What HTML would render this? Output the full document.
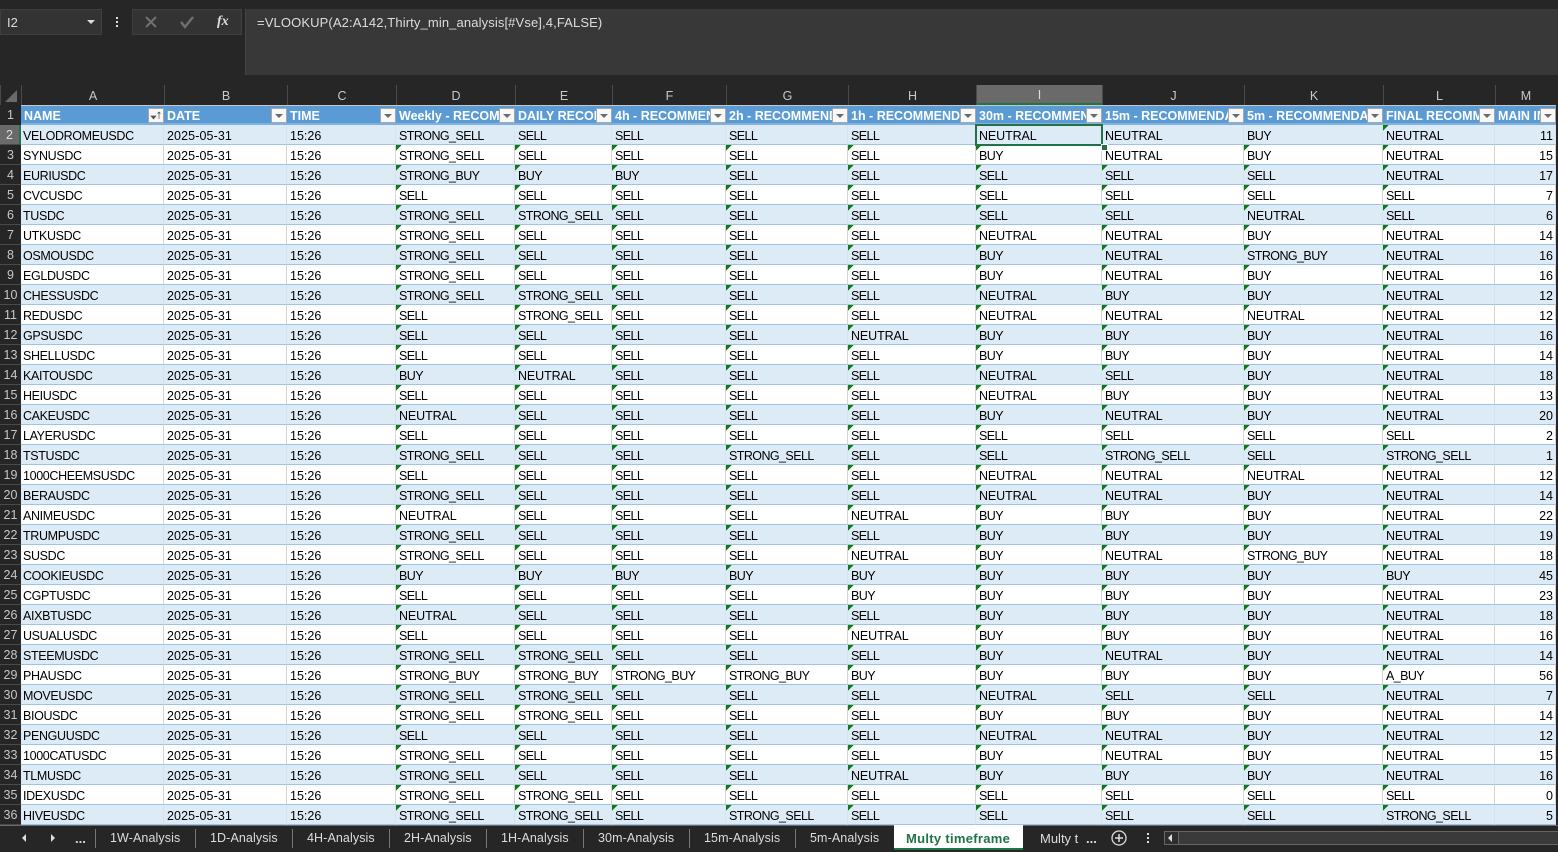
<!DOCTYPE html>
<html><head><meta charset="utf-8"><style>
html,body{margin:0;padding:0;width:1558px;height:852px;overflow:hidden;background:#262626;font-family:"Liberation Sans",sans-serif}
.a{position:absolute;white-space:nowrap}
table{position:absolute;left:0;top:85px;border-collapse:separate;border-spacing:0;table-layout:fixed;width:1556px;font-size:12.5px;color:#000}
th,td{padding:0;overflow:hidden;white-space:nowrap;font-weight:normal;box-sizing:content-box}
.l th{height:20px;background:#262626;color:#c8c8c8;font-size:12.5px;border-left:1px solid #4a4a4a;box-sizing:border-box;padding-top:1px}
.l th.s{background:#6a6a6a;color:#ddd;border-bottom:2px solid #217346}
.h th{height:15px;padding-top:2px;background:#5b9bd5;color:#fff;font-weight:bold;font-size:12.5px;text-align:left;padding-left:3px;position:relative;border-top:1px solid #c8c8c8;border-bottom:2px solid #7fb1df}
.h th:first-child,tbody th{background:#262626;color:#c8c8c8;font-weight:normal;text-align:center;padding:0;border-top:0;border-bottom:1px solid #4a4a4a;font-size:12.5px;letter-spacing:0;height:19px}
.h th:first-child{height:20px;border-bottom:0}
tbody th.s{background:#6a6a6a;color:#ddd;border-right:2px solid #217346}
i.b{position:absolute;right:0;top:2px;width:14px;height:13px;background:#f8f8f8;border:1px solid #a6a6a6}
i.b:after{content:"";position:absolute;left:3px;top:5px;border:4px solid transparent;border-top:4px solid #6a6a6a;border-bottom:0}
i.f:after{display:none}
i.f svg{position:absolute;left:0;top:0}
td{height:17px;padding-top:2px;background-color:#fff;padding-left:3px;border-bottom:1px solid #9dc3e6;border-right:1px solid #d4d4d4;letter-spacing:-.57px}
tbody tr:nth-child(odd) td{background-color:#ddebf7;border-right-color:#d5e3f0}
tbody tr:nth-child(n+2) td:nth-child(n+5):nth-child(-n+13),tbody tr:first-child td.t{background-image:linear-gradient(135deg,#107c10 4px,transparent 4px);background-repeat:no-repeat;background-size:6px 6px}
td:nth-child(2){padding-left:2px;letter-spacing:-.35px}
td:nth-child(3){letter-spacing:.1px}
td:nth-child(4){letter-spacing:0}
td.n{letter-spacing:-.1px}
td:nth-child(14){text-align:right;padding:2px 2px 0 0;letter-spacing:0}
</style></head><body>
<div class="a" style="left:0;top:9px;width:102px;height:26px;background:#333;box-sizing:border-box;border:1px solid #3f3f3f"></div>
<div class="a" style="left:7px;top:15px;color:#ddd;font-size:13px">I2</div>
<div class="a" style="left:87px;top:20px;border:4px solid transparent;border-top:4px solid #ddd;border-bottom:0"></div>
<div class="a" style="left:116px;top:17px;width:2px;height:2px;background:#ddd;box-shadow:0 4px #ddd,0 8px #ddd"></div>
<div class="a" style="left:132px;top:9px;width:110px;height:26px;background:#333;box-sizing:border-box;border:1px solid #3f3f3f"></div>
<svg class="a" style="left:132px;top:9px" width="110" height="26"><path d="M14 8l10 10M24 8L14 18" stroke="#707070" stroke-width="2" fill="none"/><path d="M49 13l4 5 8-10" stroke="#707070" stroke-width="2.4" fill="none"/></svg>
<div class="a" style="left:217px;top:14px;color:#ddd;font:italic bold 14px 'Liberation Serif',serif">fx</div>
<div class="a" style="left:245px;top:9px;width:1313px;height:66px;background:#383838;border-left:1px solid #444;box-sizing:border-box"></div>
<div class="a" style="left:257px;top:15px;color:#ddd;font-size:13px;letter-spacing:.12px">=VLOOKUP(A2:A142,Thirty_min_analysis[#Vse],4,FALSE)</div>
<table>
<colgroup><col style="width:21px"><col style="width:143px"><col style="width:123px"><col style="width:109px"><col style="width:119px"><col style="width:97px"><col style="width:114px"><col style="width:122px"><col style="width:128px"><col style="width:126px"><col style="width:142px"><col style="width:139px"><col style="width:112px"><col style="width:61px"></colgroup>
<thead>
<tr class="l"><th><th>A<th>B<th>C<th>D<th>E<th>F<th>G<th>H<th class="s">I<th>J<th>K<th>L<th>M</tr>
<tr class="h"><th>1<th>NAME<i class="b f"><svg width="14" height="13"><path d="M2 7h5l-2.500 3zM10 10V3M8.500 4.500L10 3l1.500 1.500" fill="#555" stroke="#555" stroke-width=".7"/></svg></i><th>DATE<i class="b"></i><th>TIME<i class="b"></i><th>Weekly - RECOMMENDATION<i class="b"></i><th>DAILY RECOMMENDATION<i class="b"></i><th>4h - RECOMMENDATION<i class="b"></i><th>2h - RECOMMENDATION<i class="b"></i><th>1h - RECOMMENDATION<i class="b"></i><th>30m - RECOMMENDATION<i class="b"></i><th>15m - RECOMMENDATION<i class="b"></i><th>5m - RECOMMENDATION<i class="b"></i><th>FINAL RECOMMENDATION<i class="b"></i><th>MAIN INDEX<i class="b"></i></tr>
</thead>
<tbody>
<tr><th class="s">2<td>VELODROMEUSDC<td>2025-05-31<td>15:26<td>STRONG_SELL<td>SELL<td>SELL<td>SELL<td>SELL<td class="n">NEUTRAL<td class="n">NEUTRAL<td>BUY<td class="t n">NEUTRAL<td>11</tr>
<tr><th>3<td>SYNUSDC<td>2025-05-31<td>15:26<td>STRONG_SELL<td>SELL<td>SELL<td>SELL<td>SELL<td>BUY<td class="n">NEUTRAL<td>BUY<td class="n">NEUTRAL<td>15</tr>
<tr><th>4<td>EURIUSDC<td>2025-05-31<td>15:26<td>STRONG_BUY<td>BUY<td>BUY<td>SELL<td>SELL<td>SELL<td>SELL<td>SELL<td class="n">NEUTRAL<td>17</tr>
<tr><th>5<td>CVCUSDC<td>2025-05-31<td>15:26<td>SELL<td>SELL<td>SELL<td>SELL<td>SELL<td>SELL<td>SELL<td>SELL<td>SELL<td>7</tr>
<tr><th>6<td>TUSDC<td>2025-05-31<td>15:26<td>STRONG_SELL<td>STRONG_SELL<td>SELL<td>SELL<td>SELL<td>SELL<td>SELL<td class="n">NEUTRAL<td>SELL<td>6</tr>
<tr><th>7<td>UTKUSDC<td>2025-05-31<td>15:26<td>STRONG_SELL<td>SELL<td>SELL<td>SELL<td>SELL<td class="n">NEUTRAL<td class="n">NEUTRAL<td>BUY<td class="n">NEUTRAL<td>14</tr>
<tr><th>8<td>OSMOUSDC<td>2025-05-31<td>15:26<td>STRONG_SELL<td>SELL<td>SELL<td>SELL<td>SELL<td>BUY<td class="n">NEUTRAL<td>STRONG_BUY<td class="n">NEUTRAL<td>16</tr>
<tr><th>9<td>EGLDUSDC<td>2025-05-31<td>15:26<td>STRONG_SELL<td>SELL<td>SELL<td>SELL<td>SELL<td>BUY<td class="n">NEUTRAL<td>BUY<td class="n">NEUTRAL<td>16</tr>
<tr><th>10<td>CHESSUSDC<td>2025-05-31<td>15:26<td>STRONG_SELL<td>STRONG_SELL<td>SELL<td>SELL<td>SELL<td class="n">NEUTRAL<td>BUY<td>BUY<td class="n">NEUTRAL<td>12</tr>
<tr><th>11<td>REDUSDC<td>2025-05-31<td>15:26<td>SELL<td>STRONG_SELL<td>SELL<td>SELL<td>SELL<td class="n">NEUTRAL<td class="n">NEUTRAL<td class="n">NEUTRAL<td class="n">NEUTRAL<td>12</tr>
<tr><th>12<td>GPSUSDC<td>2025-05-31<td>15:26<td>SELL<td>SELL<td>SELL<td>SELL<td class="n">NEUTRAL<td>BUY<td>BUY<td>BUY<td class="n">NEUTRAL<td>16</tr>
<tr><th>13<td>SHELLUSDC<td>2025-05-31<td>15:26<td>SELL<td>SELL<td>SELL<td>SELL<td>SELL<td>BUY<td>BUY<td>BUY<td class="n">NEUTRAL<td>14</tr>
<tr><th>14<td>KAITOUSDC<td>2025-05-31<td>15:26<td>BUY<td class="n">NEUTRAL<td>SELL<td>SELL<td>SELL<td class="n">NEUTRAL<td>SELL<td>BUY<td class="n">NEUTRAL<td>18</tr>
<tr><th>15<td>HEIUSDC<td>2025-05-31<td>15:26<td>SELL<td>SELL<td>SELL<td>SELL<td>SELL<td class="n">NEUTRAL<td>BUY<td>BUY<td class="n">NEUTRAL<td>13</tr>
<tr><th>16<td>CAKEUSDC<td>2025-05-31<td>15:26<td class="n">NEUTRAL<td>SELL<td>SELL<td>SELL<td>SELL<td>BUY<td class="n">NEUTRAL<td>BUY<td class="n">NEUTRAL<td>20</tr>
<tr><th>17<td>LAYERUSDC<td>2025-05-31<td>15:26<td>SELL<td>SELL<td>SELL<td>SELL<td>SELL<td>SELL<td>SELL<td>SELL<td>SELL<td>2</tr>
<tr><th>18<td>TSTUSDC<td>2025-05-31<td>15:26<td>STRONG_SELL<td>SELL<td>SELL<td>STRONG_SELL<td>SELL<td>SELL<td>STRONG_SELL<td>SELL<td>STRONG_SELL<td>1</tr>
<tr><th>19<td>1000CHEEMSUSDC<td>2025-05-31<td>15:26<td>SELL<td>SELL<td>SELL<td>SELL<td>SELL<td class="n">NEUTRAL<td class="n">NEUTRAL<td class="n">NEUTRAL<td class="n">NEUTRAL<td>12</tr>
<tr><th>20<td>BERAUSDC<td>2025-05-31<td>15:26<td>STRONG_SELL<td>SELL<td>SELL<td>SELL<td>SELL<td class="n">NEUTRAL<td class="n">NEUTRAL<td>BUY<td class="n">NEUTRAL<td>14</tr>
<tr><th>21<td>ANIMEUSDC<td>2025-05-31<td>15:26<td class="n">NEUTRAL<td>SELL<td>SELL<td>SELL<td class="n">NEUTRAL<td>BUY<td>BUY<td>BUY<td class="n">NEUTRAL<td>22</tr>
<tr><th>22<td>TRUMPUSDC<td>2025-05-31<td>15:26<td>STRONG_SELL<td>SELL<td>SELL<td>SELL<td>SELL<td>BUY<td>BUY<td>BUY<td class="n">NEUTRAL<td>19</tr>
<tr><th>23<td>SUSDC<td>2025-05-31<td>15:26<td>STRONG_SELL<td>SELL<td>SELL<td>SELL<td class="n">NEUTRAL<td>BUY<td class="n">NEUTRAL<td>STRONG_BUY<td class="n">NEUTRAL<td>18</tr>
<tr><th>24<td>COOKIEUSDC<td>2025-05-31<td>15:26<td>BUY<td>BUY<td>BUY<td>BUY<td>BUY<td>BUY<td>BUY<td>BUY<td>BUY<td>45</tr>
<tr><th>25<td>CGPTUSDC<td>2025-05-31<td>15:26<td>SELL<td>SELL<td>SELL<td>SELL<td>BUY<td>BUY<td>BUY<td>BUY<td class="n">NEUTRAL<td>23</tr>
<tr><th>26<td>AIXBTUSDC<td>2025-05-31<td>15:26<td class="n">NEUTRAL<td>SELL<td>SELL<td>SELL<td>SELL<td>BUY<td>BUY<td>BUY<td class="n">NEUTRAL<td>18</tr>
<tr><th>27<td>USUALUSDC<td>2025-05-31<td>15:26<td>SELL<td>SELL<td>SELL<td>SELL<td class="n">NEUTRAL<td>BUY<td>BUY<td>BUY<td class="n">NEUTRAL<td>16</tr>
<tr><th>28<td>STEEMUSDC<td>2025-05-31<td>15:26<td>STRONG_SELL<td>STRONG_SELL<td>SELL<td>SELL<td>SELL<td>BUY<td class="n">NEUTRAL<td>BUY<td class="n">NEUTRAL<td>14</tr>
<tr><th>29<td>PHAUSDC<td>2025-05-31<td>15:26<td>STRONG_BUY<td>STRONG_BUY<td>STRONG_BUY<td>STRONG_BUY<td>BUY<td>BUY<td>BUY<td>BUY<td>A_BUY<td>56</tr>
<tr><th>30<td>MOVEUSDC<td>2025-05-31<td>15:26<td>STRONG_SELL<td>STRONG_SELL<td>SELL<td>SELL<td>SELL<td class="n">NEUTRAL<td>SELL<td>SELL<td class="n">NEUTRAL<td>7</tr>
<tr><th>31<td>BIOUSDC<td>2025-05-31<td>15:26<td>STRONG_SELL<td>STRONG_SELL<td>SELL<td>SELL<td>SELL<td>BUY<td>BUY<td>BUY<td class="n">NEUTRAL<td>14</tr>
<tr><th>32<td>PENGUUSDC<td>2025-05-31<td>15:26<td>SELL<td>SELL<td>SELL<td>SELL<td>SELL<td class="n">NEUTRAL<td class="n">NEUTRAL<td>BUY<td class="n">NEUTRAL<td>12</tr>
<tr><th>33<td>1000CATUSDC<td>2025-05-31<td>15:26<td>STRONG_SELL<td>SELL<td>SELL<td>SELL<td>SELL<td>BUY<td class="n">NEUTRAL<td>BUY<td class="n">NEUTRAL<td>15</tr>
<tr><th>34<td>TLMUSDC<td>2025-05-31<td>15:26<td>STRONG_SELL<td>SELL<td>SELL<td>SELL<td class="n">NEUTRAL<td>BUY<td>BUY<td>BUY<td class="n">NEUTRAL<td>16</tr>
<tr><th>35<td>IDEXUSDC<td>2025-05-31<td>15:26<td>STRONG_SELL<td>STRONG_SELL<td>SELL<td>SELL<td>SELL<td>SELL<td>SELL<td>SELL<td>SELL<td>0</tr>
<tr><th>36<td>HIVEUSDC<td>2025-05-31<td>15:26<td>STRONG_SELL<td>STRONG_SELL<td>SELL<td>STRONG_SELL<td>SELL<td>SELL<td>SELL<td>SELL<td>STRONG_SELL<td>5</tr>
</tbody></table>
<svg class="a" style="left:0;top:85px" width="21" height="20"><path d="M17 5V17H5Z" fill="#6a6a6a"/></svg>
<div class="a" style="left:975px;top:124px;width:128px;height:22px;box-sizing:border-box;border:2px solid #217346"></div>
<div class="a" style="left:1101px;top:144px;width:5px;height:5px;background:#217346;border:1px solid #fff;box-sizing:content-box"></div>
<div class="a" style="left:0;top:825px;width:1558px;height:27px;background:#262626;border-top:1px solid #6a6a6a;box-sizing:border-box"></div>
<div class="a" style="left:22px;top:834px;border:4px solid transparent;border-right:4px solid #ddd;border-left:0"></div>
<div class="a" style="left:51px;top:834px;border:4px solid transparent;border-left:4px solid #ddd;border-right:0"></div>
<div class="a" style="left:75px;top:831px;color:#ddd;font-size:13px;font-weight:bold">...</div>
<div class="a" style="left:95px;top:829px;width:1px;height:19px;background:#777;box-shadow:100px 0 #777,197px 0 #777,294px 0 #777,391px 0 #777,488px 0 #777,594px 0 #777,700px 0 #777"></div>
<div class="a" style="left:110px;top:831px;color:#ddd;font-size:12.5px;letter-spacing:.1px">1W-Analysis</div>
<div class="a" style="left:210px;top:831px;color:#ddd;font-size:12.5px;letter-spacing:.1px">1D-Analysis</div>
<div class="a" style="left:307px;top:831px;color:#ddd;font-size:12.5px;letter-spacing:.1px">4H-Analysis</div>
<div class="a" style="left:404px;top:831px;color:#ddd;font-size:12.5px;letter-spacing:.1px">2H-Analysis</div>
<div class="a" style="left:501px;top:831px;color:#ddd;font-size:12.5px;letter-spacing:.1px">1H-Analysis</div>
<div class="a" style="left:598px;top:831px;color:#ddd;font-size:12.5px;letter-spacing:.1px">30m-Analysis</div>
<div class="a" style="left:704px;top:831px;color:#ddd;font-size:12.5px;letter-spacing:.1px">15m-Analysis</div>
<div class="a" style="left:810px;top:831px;color:#ddd;font-size:12.5px;letter-spacing:.1px">5m-Analysis</div>
<div class="a" style="left:894px;top:825px;width:129px;height:25px;background:#fff;border-bottom:2px solid #217346;box-sizing:border-box"></div>
<div class="a" style="left:906px;top:831px;color:#217346;font-size:13px;letter-spacing:.3px;font-weight:bold">Multy timeframe</div>
<div class="a" style="left:1040px;top:831px;width:39px;overflow:hidden;color:#ddd;font-size:13px">Multy t</div>
<div class="a" style="left:1086px;top:831px;color:#ddd;font-size:13px;font-weight:bold">...</div>
<svg class="a" style="left:1110px;top:829px" width="18" height="18"><circle cx="9" cy="9" r="7" fill="none" stroke="#ddd" stroke-width="1.3"/><path d="M5 9h8M9 5v8" stroke="#ddd" stroke-width="1.5"/></svg>
<div class="a" style="left:1147px;top:833px;width:2px;height:2px;background:#ddd;box-shadow:0 4px #ddd,0 8px #ddd"></div>
<div class="a" style="left:1164px;top:831px;width:394px;height:14px;background:#3a3a3a;border-top:1px solid #666;border-bottom:1px solid #666;box-sizing:border-box"></div>
<div class="a" style="left:1164px;top:831px;width:15px;height:14px;border:1px solid #666;box-sizing:border-box;background:#2e2e2e"></div>
<div class="a" style="left:1168px;top:834px;border:4px solid transparent;border-right:4px solid #ddd;border-left:0"></div>
</body></html>
